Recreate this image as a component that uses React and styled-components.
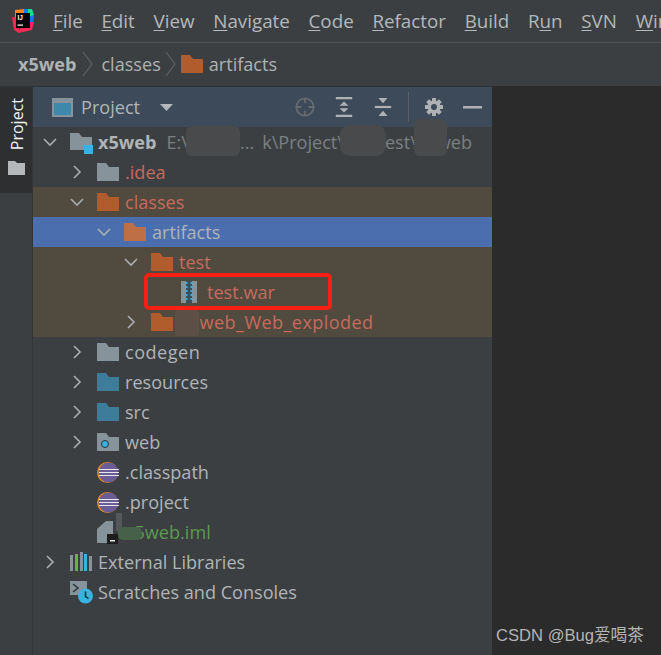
import styled, { createGlobalStyle } from 'styled-components';

const FONT = '"Open Sans", "Noto Sans", "Liberation Sans", sans-serif';

const GlobalStyle = createGlobalStyle`
  html, body {
    margin: 0;
    padding: 0;
    background: #3c3f41;
  }
  #root {
    width: 661px;
    height: 655px;
    overflow: hidden;
  }
`;

const Frame = styled.div`
  position: relative;
  width: 661px;
  height: 655px;
  display: flex;
  flex-direction: column;
  overflow: hidden;
  background: #3c3f41;
  color: #b4b8ba;
  font-family: ${FONT};
  font-size: 18.1px;
`;

const MenuBar = styled.div`
  height: 42px;
  display: flex;
  align-items: center;
  flex: none;
  padding-left: 12px;
  border-bottom: 1px solid #515456;
  white-space: nowrap;
  svg { flex: none; }
`;

const MenuItems = styled.div`
  display: flex;
  gap: 18.7px;
  margin-left: 19px;
  font-size: 18.8px;
`;

const MenuItem = styled.span`
  color: #b4b8ba;
  flex: none;
  u { text-underline-offset: 2px; }
`;

const Breadcrumbs = styled.div`
  height: 44px;
  flex: none;
  display: flex;
  align-items: center;
  padding: 0 0 2px 18px;
  border-bottom: 1px solid #2f3132;
  box-sizing: border-box;
`;

const Crumb = styled.span`
  font-weight: ${p => (p.$bold ? 700 : 400)};
  color: #aeb2b4;
  margin-left: ${p => p.$gap || 0}px;
`;

const CrumbArrow = styled.svg`
  width: ${p => p.$w}px;
  height: 28px;
  flex: none;
  fill: none;
  stroke: #5f6365;
  stroke-width: 1.2;
`;

const Body = styled.div`
  flex: 1;
  display: flex;
  min-height: 0;
`;

const Stripe = styled.div`
  width: 32px;
  flex: none;
  border-right: 1px solid #323436;
  display: flex;
  flex-direction: column;
`;

const StripeTab = styled.div`
  height: 106px;
  background: #2d2f30;
  color: #f0f0f0;
  display: flex;
  flex-direction: column;
  align-items: center;
  padding-top: 11px;
  box-sizing: border-box;
`;

const VerticalLabel = styled.span`
  writing-mode: vertical-rl;
  transform: rotate(180deg);
  font-size: 16px;
  line-height: 18px;
  margin-left: 2px;
`;

const StripeIcon = styled.svg`
  margin-top: 11px;
`;

const Panel = styled.div`
  width: 459px;
  flex: none;
  display: flex;
  flex-direction: column;
`;

const PanelHeader = styled.div`
  height: 40px;
  flex: none;
  background: #3d4a5a;
  display: flex;
  align-items: center;
  padding-left: 19px;
  box-sizing: border-box;
`;

const HeaderTitle = styled.span`
  margin-left: 8px;
  color: #aeb4ba;
`;

const HeaderCaret = styled.svg`
  margin-left: 20px;
`;

const HeaderTools = styled.div`
  margin-left: auto;
  display: flex;
  align-items: center;
  gap: 20px;
  padding-right: 10px;
`;

const ToolDivider = styled.div`
  width: 1px;
  height: 30px;
  background: #5a6066;
  margin: 0 -4px;
`;

const Tree = styled.div`
  flex: 1;
  display: flex;
  flex-direction: column;
`;

const rowBg = { plain: 'transparent', ignored: '#504a3f', selected: '#4b6eaf' };

const Row = styled.div`
  height: 30px;
  flex: none;
  display: flex;
  align-items: center;
  box-sizing: border-box;
  padding-left: ${p => p.$indent}px;
  background: ${p => rowBg[p.$kind || 'plain']};
  white-space: nowrap;
`;

const Arrow = styled.svg`
  width: 16px;
  height: 16px;
  flex: none;
  margin-right: 11px;
`;

const ArrowSpace = styled.span`
  width: 27px;
  flex: none;
`;

const RowIcon = styled.span`
  width: 22px;
  height: 22px;
  flex: none;
  display: flex;
  align-items: center;
  justify-content: center;
  margin-right: 6px;
`;

const RowText = styled.span`
  color: ${p => p.$color || '#b0b4b7'};
  font-weight: ${p => (p.$bold ? 700 : 400)};
  letter-spacing: ${p => p.$track || 0}px;
`;

const PathHint = styled.span`
  display: flex;
  color: #7b7f82;
  margin-left: 10px;
`;

const PathGap = styled.span`
  width: ${p => p.$w}px;
  flex: none;
`;

const Editor = styled.div`
  flex: 1;
  position: relative;
  background: #2b2b2b;
  margin-top: -1px;
`;

const Watermark = styled.span`
  position: absolute;
  left: 4px;
  top: 536px;
  font-family: "Liberation Sans", "Noto Sans CJK SC", sans-serif;
  font-size: 16.6px;
  color: #b4b4b4;
  white-space: nowrap;
`;

const Smudge = styled.div`
  position: absolute;
  left: ${p => p.$x}px;
  top: ${p => p.$y}px;
  width: ${p => p.$w}px;
  height: ${p => p.$h}px;
  background: ${p => p.$bg};
  border-radius: ${p => p.$r || 0}px;
`;

const Highlight = styled.div`
  position: absolute;
  left: 144px;
  top: 273px;
  width: 188px;
  height: 37px;
  box-sizing: border-box;
  border: 4px solid #fa1f14;
  border-radius: 5px;
`;

const FOLDER = { grey: '#87939a', orange: '#b05c2c', blue: '#3d7d99', light: '#bf6f45' };

const Folder = ({ color, dot }) => (
  <svg width="22" height="18" viewBox="0 0 22 18" style={{ flex: 'none' }}>
    <path d="M0 0h9l3 4h10v14H0z" fill={FOLDER[color]} />
    {dot && <circle cx="8" cy="11" r="3.5" fill="#38b2e0" stroke="#2a3438" strokeWidth="1" />}
  </svg>
);

const Chevron = ({ open }) => (
  <Arrow viewBox="0 0 16 16" fill="none" stroke="#a9adb0" strokeWidth="1.6">
    {open ? <path d="M1 5l6 6 6-6" /> : <path d="M4 2l6 6-6 6" />}
  </Arrow>
);

const Eclipse = () => (
  <svg width="22" height="21" viewBox="0 0 22 21">
    <circle cx="10.5" cy="10.5" r="10.5" fill="#e88a1a" />
    <circle cx="11.5" cy="10.5" r="10" fill="#6a5c94" />
    <path d="M2 7.5h20M2 10.5h20M2 13.5h20" stroke="#e6e6ef" strokeWidth="1.2" />
  </svg>
);

const ZipFile = () => (
  <svg width="16" height="22" viewBox="0 0 16 22" style={{ marginLeft: -2 }}>
    <rect x="0" y="0" width="16" height="22" fill="#87939a" />
    <rect x="5" y="0" width="6" height="22" fill="#38505c" />
    <path d="M5.5 1v20M10.5 1v20" stroke="#38b2e0" strokeWidth="2" strokeDasharray="2 2" />
  </svg>
);

const ImlFile = () => (
  <svg width="22" height="24" viewBox="0 0 22 24">
    <path d="M0 9L9 1h7v22H0z" fill="#87939a" />
    <rect x="10" y="14" width="11" height="10" fill="#1d1d1d" />
    <rect x="13" y="20" width="5" height="1.5" fill="#e8e8e8" />
  </svg>
);

const Libraries = () => (
  <svg width="22" height="22" viewBox="0 0 22 22">
    <rect x="0" y="4" width="3" height="16" fill="#87939a" />
    <rect x="5" y="3" width="3" height="17" fill="#62b543" />
    <rect x="10" y="1" width="3" height="19" fill="#87939a" />
    <rect x="14" y="3" width="3" height="17" fill="#38b2e0" />
    <rect x="19" y="5" width="3" height="15" fill="#87939a" />
  </svg>
);

const Scratches = () => (
  <svg width="23" height="23" viewBox="0 0 23 23" style={{ flex: 'none' }}>
    <rect x="0" y="0" width="17" height="14" fill="#87939a" />
    <path d="M3 3l5 4-5 4" fill="none" stroke="#2f3234" strokeWidth="1.6" />
    <circle cx="15.5" cy="15" r="7.5" fill="#38b2e0" />
    <path d="M15.5 10.5v5l3 2" fill="none" stroke="#23292c" strokeWidth="1.5" />
  </svg>
);

const AppLogo = () => (
  <svg width="22" height="24" viewBox="0 0 22 24">
    <path d="M3 1l9-1 1 12-10 8z" fill="#fc801d" />
    <path d="M0 8l8 1-1 15-5-3z" fill="#fe2857" />
    <path d="M12 0h8l2 8-2 10-8-6z" fill="#087cfa" />
    <path d="M6 24l14-3 2-8-10 0z" fill="#fe2857" />
    <path d="M16 0h4l2 6-6 2z" fill="#21d789" />
    <rect x="4" y="4" width="14" height="15" fill="#000" />
    <text x="5.5" y="11" fontSize="6.5" fontWeight="700" fill="#fff" fontFamily="Liberation Sans">IJ</text>
    <rect x="5.5" y="15.5" width="5.5" height="1.2" fill="#fff" />
  </svg>
);

const GEAR_TEETH = [0, 45, 90, 135];

const Gear = () => (
  <svg width="18" height="18" viewBox="0 0 18 18" fill="#aeb2b4">
    {GEAR_TEETH.map(angle => (
      <rect key={angle} x="7" y="0" width="4" height="18" rx="0.5" transform={`rotate(${angle} 9 9)`} />
    ))}
    <circle cx="9" cy="9" r="6.5" />
    <circle cx="9" cy="9" r="3" fill="#3d4a5a" />
  </svg>
);

const menu = [
  ['F', 'ile'], ['E', 'dit'], ['V', 'iew'], ['N', 'avigate'], ['C', 'ode'],
  ['R', 'efactor'], ['B', 'uild'], ['R', 'un', 'u'], ['S', 'VN'], ['W', 'indow'],
];

const ORANGE_TEXT = '#c76a5c';

const App = () => (
  <Frame>
    <GlobalStyle />
    <MenuBar>
      <AppLogo />
      <MenuItems>
        {menu.map(([head, rest, mark]) => (
          <MenuItem key={head + rest}>
            {mark ? <>{head}<u>{rest[0]}</u>{rest.slice(1)}</> : <><u>{head}</u>{rest}</>}
          </MenuItem>
        ))}
      </MenuItems>
    </MenuBar>
    <Breadcrumbs>
      <Crumb $bold>x5web</Crumb>
      <CrumbArrow $w={25} viewBox="0 0 25 28"><path d="M7 2l9 12-9 12" /></CrumbArrow>
      <Crumb>classes</Crumb>
      <CrumbArrow $w={20} viewBox="0 0 20 28"><path d="M5 2l9 12-9 12" /></CrumbArrow>
      <Folder color="orange" />
      <Crumb $gap={6}>artifacts</Crumb>
    </Breadcrumbs>
    <Body>
      <Stripe>
        <StripeTab>
          <VerticalLabel>Project</VerticalLabel>
          <StripeIcon width="17" height="14" viewBox="0 0 17 14">
            <path d="M0 0h7l2 2h8v12H0z" fill="#b4b8ba" />
          </StripeIcon>
        </StripeTab>
      </Stripe>
      <Panel>
        <PanelHeader>
          <svg width="21" height="19" viewBox="0 0 21 19">
            <rect x="0" y="0" width="21" height="19" fill="#87939a" />
            <rect x="2" y="5" width="17" height="12" fill="#3f88ab" />
          </svg>
          <HeaderTitle>Project</HeaderTitle>
          <HeaderCaret width="13" height="7" viewBox="0 0 13 7"><path d="M0 0h13L6.5 7z" fill="#b4b8ba" /></HeaderCaret>
          <HeaderTools>
            <svg width="20" height="20" viewBox="0 0 22 22" fill="none" stroke="#666b6f" strokeWidth="2">
              <circle cx="11" cy="11" r="9.5" />
              <path d="M11 1v6M11 15v6M1 11h6M15 11h6" />
            </svg>
            <svg width="18" height="20" viewBox="0 0 18 22" fill="#aeb2b4">
              <rect y="0" width="18" height="2.5" />
              <rect y="19.5" width="18" height="2.5" />
              <path d="M9 5l5 4.5H4zM9 17l-5-4.5h10z" />
            </svg>
            <svg width="18" height="20" viewBox="0 0 18 22" fill="#aeb2b4" style={{ marginLeft: 1 }}>
              <rect y="9.8" width="18" height="2.4" />
              <path d="M4 1h10L9 7zM4 21h10l-5-6z" />
            </svg>
            <ToolDivider />
            <Gear />
            <svg width="19" height="3" viewBox="0 0 19 3"><rect width="19" height="2.5" fill="#aeb2b4" /></svg>
          </HeaderTools>
        </PanelHeader>
        <Tree>
          <Row $indent={10}>
            <Chevron open />
            <RowIcon>
              <svg width="23" height="23" viewBox="0 0 23 23" style={{ flex: 'none' }}>
                <path d="M0 2h9l3 4h10v13H0z" fill="#87939a" />
                <rect x="14" y="14" width="9" height="9" fill="#38b2e0" />
              </svg>
            </RowIcon>
            <RowText $bold>x5web</RowText>
            <PathHint>
              E:\
              <PathGap $w={52} />
              ...
              <PathGap $w={8} />
              k\Project\
              <PathGap $w={41} />
              est\
              <PathGap $w={20} />
              web
            </PathHint>
          </Row>
          <Row $indent={37}><Chevron /><RowIcon><Folder color="grey" /></RowIcon><RowText $color={ORANGE_TEXT}>.idea</RowText></Row>
          <Row $indent={37} $kind="ignored"><Chevron open /><RowIcon><Folder color="orange" /></RowIcon><RowText $color={ORANGE_TEXT}>classes</RowText></Row>
          <Row $indent={64} $kind="selected"><Chevron open /><RowIcon><Folder color="light" /></RowIcon><RowText>artifacts</RowText></Row>
          <Row $indent={91} $kind="ignored"><Chevron open /><RowIcon><Folder color="orange" /></RowIcon><RowText $color={ORANGE_TEXT}>test</RowText></Row>
          <Row $indent={119} $kind="ignored"><ArrowSpace /><RowIcon><ZipFile /></RowIcon><RowText $color={ORANGE_TEXT}>test.war</RowText></Row>
          <Row $indent={91} $kind="ignored"><Chevron /><RowIcon><Folder color="orange" /></RowIcon><RowText $color={ORANGE_TEXT} $track={0.4}>x5web_Web_exploded</RowText></Row>
          <Row $indent={37}><Chevron /><RowIcon><Folder color="grey" /></RowIcon><RowText $track={0.5}>codegen</RowText></Row>
          <Row $indent={37}><Chevron /><RowIcon><Folder color="blue" /></RowIcon><RowText>resources</RowText></Row>
          <Row $indent={37}><Chevron /><RowIcon><Folder color="blue" /></RowIcon><RowText>src</RowText></Row>
          <Row $indent={37}><Chevron /><RowIcon><Folder color="grey" dot /></RowIcon><RowText>web</RowText></Row>
          <Row $indent={37}><ArrowSpace /><RowIcon><Eclipse /></RowIcon><RowText>.classpath</RowText></Row>
          <Row $indent={37}><ArrowSpace /><RowIcon><Eclipse /></RowIcon><RowText>.project</RowText></Row>
          <Row $indent={37}><ArrowSpace /><RowIcon><ImlFile /></RowIcon><RowText $color="#5b9a51">x5web.iml</RowText></Row>
          <Row $indent={10}><Chevron /><RowIcon><Libraries /></RowIcon><RowText>External Libraries</RowText></Row>
          <Row $indent={10}><ArrowSpace /><RowIcon><Scratches /></RowIcon><RowText>Scratches and Consoles</RowText></Row>
        </Tree>
      </Panel>
      <Editor>
        <Watermark>CSDN @Bug爱喝茶</Watermark>
      </Editor>
    </Body>
    <Smudge $x={186} $y={126} $w={54} $h={30} $bg="#484a4b" $r={6} />
    <Smudge $x={340} $y={125} $w={46} $h={31} $bg="#484a4b" $r={10} />
    <Smudge $x={414} $y={119} $w={33} $h={37} $bg="#484a4b" $r={6} />
    <Smudge $x={175} $y={310} $w={24} $h={26} $bg="#5c4f45" $r={3} />
    <Smudge $x={116} $y={513} $w={6} $h={18} $bg="#55585a" />
    <Smudge $x={118} $y={527} $w={24} $h={13} $bg="#47604a" $r={5} />
    <Highlight />
  </Frame>
);

export default App;
